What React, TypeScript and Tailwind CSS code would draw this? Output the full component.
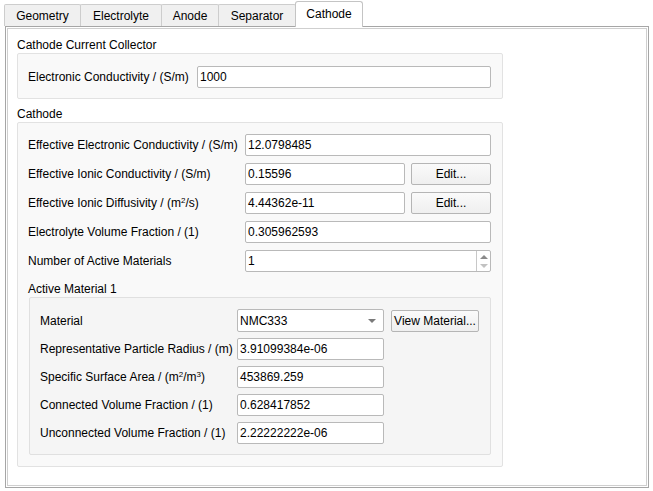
import React from "react";

const Field = ({ value, className = "" }: { value: string; className?: string }) => (
  <div
    className={`h-[22px] border border-[#b9b9b9] rounded-[2px] bg-white flex items-center pl-[2px] text-[12px] text-black ${className}`}
  >
    {value}
  </div>
);

const Btn = ({ label, className = "" }: { label: string; className?: string }) => (
  <div
    className={`h-[22px] border border-[#b5b5b5] rounded-[2px] bg-gradient-to-b from-[#fafafa] to-[#efefef] flex items-center justify-center text-[12px] text-black ${className}`}
  >
    {label}
  </div>
);

const Sup = ({ children }: { children: React.ReactNode }) => (
  <span className="text-[8px] relative -top-[4px] leading-none">{children}</span>
);

const Row = ({ label, labelW, children }: { label: React.ReactNode; labelW: string; children: React.ReactNode }) => (
  <div className="flex items-center h-[22px]">
    <div className={`${labelW} shrink-0 whitespace-nowrap`}>{label}</div>
    {children}
  </div>
);

const tabs = [
  { name: "Geometry", w: "w-[77px]" },
  { name: "Electrolyte", w: "w-[82px]" },
  { name: "Anode", w: "w-[58px]" },
  { name: "Separator", w: "w-[78px]" },
];

export default function App() {
  return (
    <div className="w-[653px] h-[491px] bg-white font-['Liberation_Sans',Arial,sans-serif] text-[12px] text-black overflow-hidden">
      {/* Tab bar */}
      <div className="flex items-end h-[26px] pl-[4px]">
        {tabs.map((t) => (
          <div
            key={t.name}
            className={`${t.w} h-[22px] -mr-px border border-b-0 border-[#cdcdcd] rounded-t-[2px] bg-[#f0f0f0] flex items-center justify-center pt-[1px]`}
          >
            {t.name}
          </div>
        ))}
        <div className="relative z-10 w-[68px] h-[26px] -mb-px border border-b-0 border-[#c4c4c4] rounded-t-[3px] bg-white flex items-center justify-center pb-[1px]">
          Cathode
        </div>
      </div>

      {/* Pane */}
      <div className="ml-[5px] w-[644px] h-[462px] border border-[#a6a6a6] shadow-[inset_0_0_0_1px_#ffffff,inset_0_0_0_2px_#cfcfcf] bg-white px-[11px] pt-[11px]">
        {/* Cathode Current Collector */}
        <div className="h-[15px] leading-[15px] whitespace-nowrap">Cathode Current Collector</div>
        <div className="w-[486px] border border-[#e2e2e2] rounded-[2px] bg-[#f9f9f9] pl-[10px] pr-[11px] pt-[12px] pb-[10px]">
          <Row label="Electronic Conductivity / (S/m)" labelW="w-[169px]">
            <Field value="1000" className="flex-1" />
          </Row>
        </div>

        {/* Cathode */}
        <div className="mt-[8px] h-[15px] leading-[15px] whitespace-nowrap">Cathode</div>
        <div className="w-[486px] border border-[#e2e2e2] rounded-[2px] bg-[#f9f9f9] pl-[10px] pr-[11px] pt-[11px] pb-[11px]">
          <div className="flex flex-col gap-[7px]">
            <Row label="Effective Electronic Conductivity / (S/m)" labelW="w-[217px]">
              <Field value="12.0798485" className="flex-1" />
            </Row>
            <Row label="Effective Ionic Conductivity / (S/m)" labelW="w-[217px]">
              <Field value="0.15596" className="w-[160px]" />
              <Btn label="Edit..." className="ml-[6px] flex-1" />
            </Row>
            <Row
              label={
                <span>
                  Effective Ionic Diffusivity / (m<Sup>2</Sup>/s)
                </span>
              }
              labelW="w-[217px]"
            >
              <Field value="4.44362e-11" className="w-[160px]" />
              <Btn label="Edit..." className="ml-[6px] flex-1" />
            </Row>
            <Row label="Electrolyte Volume Fraction / (1)" labelW="w-[217px]">
              <Field value="0.305962593" className="flex-1" />
            </Row>
            <Row label="Number of Active Materials" labelW="w-[217px]">
              <div className="flex-1 h-[22px] border border-[#b9b9b9] rounded-[2px] bg-white flex items-stretch">
                <div className="flex-1 flex items-center pl-[2px]">1</div>
                <div className="w-[14px] border-l border-[#c8c8c8] flex flex-col items-center justify-center gap-[5px]">
                  <svg width="8" height="4" viewBox="0 0 8 4">
                    <path d="M0 4 L4 0 L8 4 Z" fill="#8a8a8a" />
                  </svg>
                  <svg width="8" height="4" viewBox="0 0 8 4">
                    <path d="M0 0 L8 0 L4 4 Z" fill="#c2c2c2" />
                  </svg>
                </div>
              </div>
            </Row>
          </div>

          {/* Active Material 1 */}
          <div className="mt-[10px] h-[15px] leading-[15px] whitespace-nowrap">Active Material 1</div>
          <div className="ml-px w-[462px] border border-[#e0e0e0] rounded-[2px] bg-[#f5f5f5] pl-[10px] pr-[11px] pt-[11px] pb-[10px]">
            <div className="flex flex-col gap-[6px]">
              <div className="flex items-center h-[23px]">
                <div className="w-[197px] shrink-0">Material</div>
                <div className="w-[147px] h-[23px] border border-[#b9b9b9] rounded-[2px] bg-white flex items-center pl-[2px] pr-[7px]">
                  <span className="flex-1">NMC333</span>
                  <svg width="8" height="4" viewBox="0 0 8 4">
                    <path d="M0 0 L8 0 L4 4 Z" fill="#7a7a7a" />
                  </svg>
                </div>
                <Btn label="View Material..." className="ml-[7px] w-[88px]" />
              </div>
              <Row label="Representative Particle Radius / (m)" labelW="w-[197px]">
                <Field value="3.91099384e-06" className="w-[147px]" />
              </Row>
              <Row
                label={
                  <span>
                    Specific Surface Area / (m<Sup>2</Sup>/m<Sup>3</Sup>)
                  </span>
                }
                labelW="w-[197px]"
              >
                <Field value="453869.259" className="w-[147px]" />
              </Row>
              <Row label="Connected Volume Fraction / (1)" labelW="w-[197px]">
                <Field value="0.628417852" className="w-[147px]" />
              </Row>
              <Row label="Unconnected Volume Fraction / (1)" labelW="w-[197px]">
                <Field value="2.22222222e-06" className="w-[147px]" />
              </Row>
            </div>
          </div>
        </div>
      </div>
    </div>
  );
}
